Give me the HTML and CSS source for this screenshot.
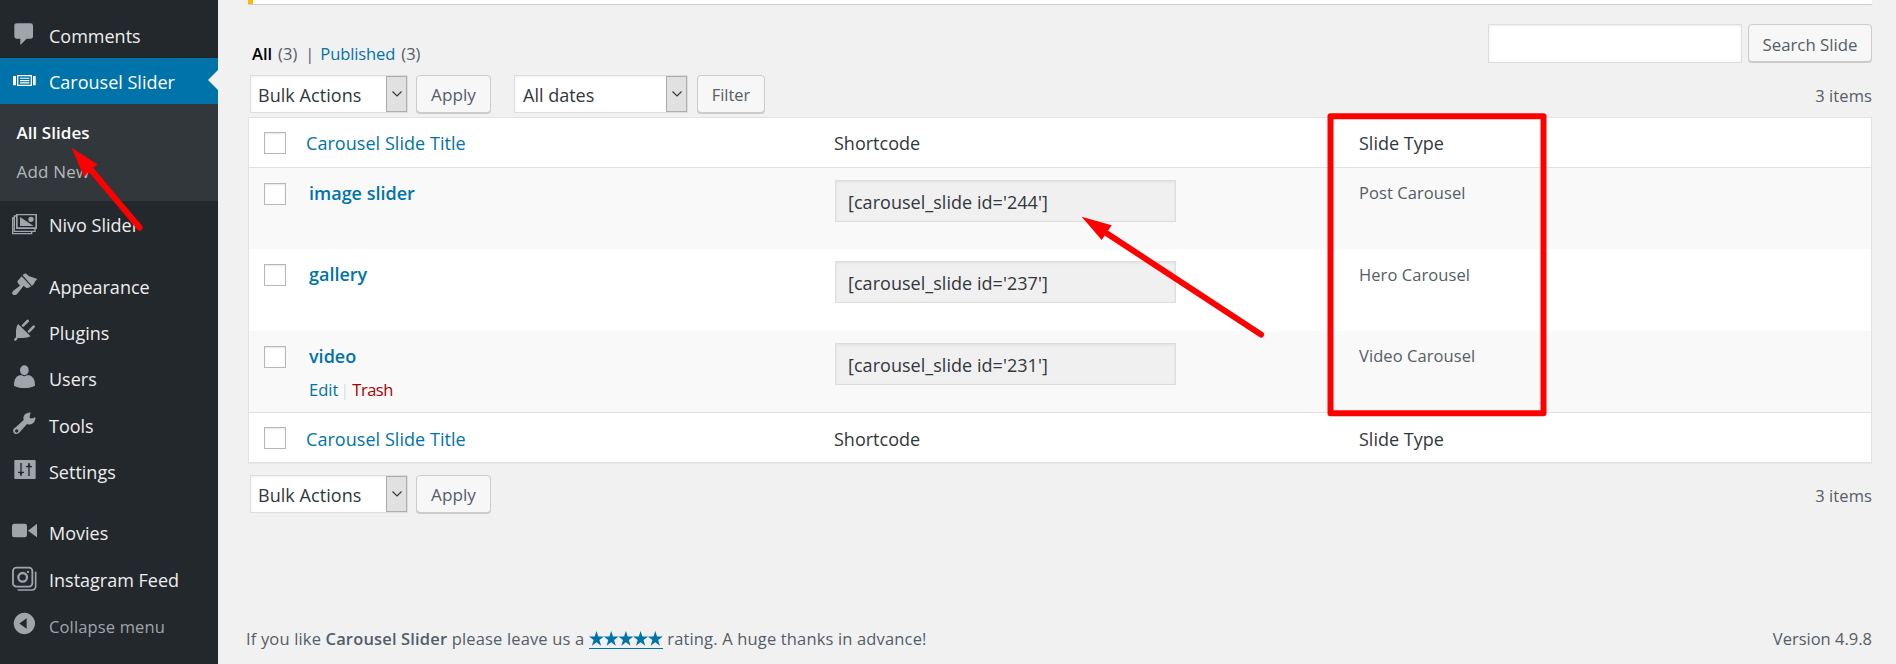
FILE: index.html
```html
<!DOCTYPE html>
<html lang="en">
<head>
<meta charset="utf-8">
<title>Slides</title>
<link rel="stylesheet" href="styles.css">
</head>
<body>
<div class="layout">
  <nav class="sidebar">
    <a class="item"><svg class="icon" viewBox="30 60 90 90"><path d="M51 70h41q7 0 7 7v31q0 8-7 8H80L61 135V116H51q-8 0-8-8V77q0-7 8-7z"/></svg>Comments</a>
    <a class="item current"><svg class="icon" viewBox="30 198 90 90"><path d="M39 228h9v28h-9zM99 228h8v28h-8zM51 225h45v33H51zM55 229v25h37v-25z" fill-rule="evenodd"/><path d="M60 233h28v3.500H60zM60 240h28v3.500H60zM60 247h28v3.500H60z"/></svg>Carousel Slider</a>
    <div class="submenu"><a class="sub active">All Slides</a><a class="sub">Add New</a></div>
    <a class="item"><svg class="icon" viewBox="30 27 90 90"><path d="M48 42h63v45H48zM53 46v36h53V46z" fill-rule="evenodd"/><path d="M60 51v27h41z"/><circle cx="93" cy="58" r="8"/><path d="M48 48h-5v46h62v-7M43 54h-5v47h57v-7" fill="none" stroke="#a0a5aa" stroke-width="4"/></svg>Nivo Slider</a>
    <div class="gap"></div>
    <a class="item"><svg class="icon" viewBox="30 213 90 90"><path d="M68 229q3-6 11-5l7 7q9 3 26 9-10 8-10 14l-6 7zM65 232l28 30q-8 8-15 4l-7-6-19 24q-5 6-12 3-6-3-3-8 3-5 9-8l14-11-7-9q-3-6 3-9z"/></svg>Appearance</a>
    <a class="item"><svg class="icon" viewBox="30 351 90 90"><path d="M54 375l38 37q-10 6-29 5l-9 0-6 8q-6 2-6-4l6-7V396q0-12 6-21z"/><path d="M69 380l14-14M87 397l14-14" fill="none" stroke="#a0a5aa" stroke-width="8" stroke-linecap="round"/></svg>Plugins</a>
    <a class="item tall"><svg class="icon" viewBox="30 489 90 90"><ellipse cx="73" cy="514" rx="13" ry="15"/><path d="M58 529l8 0q7 6 14 0l8 0q17 5 17 31-12 7-32 7t-31-7q0-26 16-31z"/></svg>Users</a>
    <a class="item"><svg class="icon" viewBox="30 30 90 90"><path d="M92 41q-4 8-3 16 9 4 17-3 1 12-7 19-9 6-18 2L59 100q-7 8-15 4-8-6-3-14 2-3 6-5L71 63q-3-11 5-18 8-6 16-4zM50 91a5 5 0 1 0 .1 0z" fill-rule="evenodd"/></svg>Tools</a>
    <a class="item"><svg class="icon" viewBox="30 168 90 90"><rect x="43" y="183" width="64" height="57" rx="3"/><path d="M63 192v39M87 192v39M54 220h18M78 203h18" fill="none" stroke="#23282d" stroke-width="4"/><path d="M57 220h12l-6 9zM81 203h12l-6-9z" fill="#23282d"/></svg>Settings</a>
    <div class="gap"></div>
    <a class="item tall"><svg class="icon" viewBox="30 351 90 90"><rect x="36" y="374" width="45" height="41" rx="7"/><path d="M84 395l27-21v41z"/></svg>Movies</a>
    <a class="item"><svg class="icon" viewBox="30 492 90 90"><g fill="none" stroke="#a0a5aa" stroke-width="5.500"><rect x="39" y="506" width="58" height="57" rx="10"/><circle cx="68" cy="535" r="13" stroke-width="7"/><path d="M107 518v43q0 12-12 12H53" stroke-width="5"/></g><circle cx="84" cy="519" r="3.500"/></svg>Instagram Feed</a>
    <a class="item collapse"><svg class="icon" viewBox="30 630 90 90"><path d="M73 641.500a32 32 0 1 0 .1 0zM80 658v31l-22-15.500z" fill-rule="evenodd"/></svg>Collapse menu</a>
  </nav>
  <main class="main">
    <div class="notice"></div>
    <header class="head">
      <div class="views"><b>All</b><span>(3)</span><span class="bar">|</span><a>Published</a><span>(3)</span></div>
      <div class="search"><div class="field"></div><div class="button">Search Slide</div></div>
    </header>
    <div class="tablenav">
      <div class="select bulk"><span>Bulk Actions</span><i><svg viewBox="0 0 10 6"><path d="M.5.5L5 5 9.500.5"/></svg></i></div>
      <div class="button apply">Apply</div>
      <div class="select dates"><span>All dates</span><i><svg viewBox="0 0 10 6"><path d="M.5.5L5 5 9.500.5"/></svg></i></div>
      <div class="button filter">Filter</div>
      <span class="count">3 items</span>
    </div>
    <section class="table">
      <div class="row thead"><i class="check"></i><a>Carousel Slide Title</a><span>Shortcode</span><span>Slide Type</span></div>
      <div class="row alt"><i class="check"></i><div class="title"><b>image slider</b></div><div class="code">[carousel_slide id='244']</div><span class="type">Post Carousel</span></div>
      <div class="row mid"><i class="check"></i><div class="title"><b>gallery</b></div><div class="code">[carousel_slide id='237']</div><span class="type">Hero Carousel</span></div>
      <div class="row alt"><i class="check"></i><div class="title"><b>video</b><div class="actions"><a>Edit</a><span class="sep">|</span><a class="trash">Trash</a></div></div><div class="code">[carousel_slide id='231']</div><span class="type">Video Carousel</span></div>
      <div class="row tfoot"><i class="check"></i><a>Carousel Slide Title</a><span>Shortcode</span><span>Slide Type</span></div>
    </section>
    <div class="tablenav bottom">
      <div class="select bulk"><span>Bulk Actions</span><i><svg viewBox="0 0 10 6"><path d="M.5.5L5 5 9.500.5"/></svg></i></div>
      <div class="button apply">Apply</div>
      <span class="count">3 items</span>
    </div>
    <footer class="footer"><p>If you like <b>Carousel Slider</b> please leave us a <a class="stars"><svg viewBox="0 0 74 15"><defs><path id="star" d="M7.500 0l1.800 5.600h5.700l-4.600 3.500 1.700 5.700-4.600-3.500-4.600 3.500 1.700-5.700L0 5.600h5.700z"/></defs><use href="#star"/><use href="#star" x="14.700"/><use href="#star" x="29.400"/><use href="#star" x="44.100"/><use href="#star" x="58.800"/></svg></a> rating. A huge thanks in advance!</p><span>Version 4.9.8</span></footer>
  </main>
</div>
<svg class="marks" viewBox="0 0 1896 664">
  <path class="line" d="M92 171L139.500 227.500M1107 233.500L1261 334.500"/>
  <path class="tip" d="M71.700 147.700L97.700 164.500 91 169 84 177zM1081.700 216.700L1111.700 225.300 1101.700 240z"/>
  <rect class="line" x="1330.500" y="116.300" width="213" height="297"/>
</svg>
</body>
</html>
```
FILE: styles.css
```css
* { box-sizing: border-box; }
body { margin: 0; background: #f1f1f1; color: #555d66; font-family: "Open Sans", "Noto Sans", sans-serif; font-size: 16.5px; overflow: hidden; }
.layout { display: flex; height: 664px; }

.sidebar { width: 218px; background: #23282d; padding-top: 12px; flex: none; }
.item { display: flex; height: 46px; padding-left: 10px; color: #eee; font-size: 18px; line-height: 48px; letter-spacing: 0; white-space: nowrap; }
.gap ~ .item { line-height: 50px; }
.item.tall { height: 47px; }
.item.current { background: #0073aa; color: #fff; position: relative; }
.item.current::after { content: ""; position: absolute; right: 0; top: 12px; border: 10px solid transparent; border-right-color: #f1f1f1; border-left: 0; }
.sidebar .item.collapse { color: #a0a5aa; font-size: 16.5px; letter-spacing: .15px; line-height: 51px; }
.icon { width: 30px; height: 30px; margin: 8px 9px 0 0; fill: #a0a5aa; flex: none; }
.current .icon { fill: #fff; }
.gap { height: 15px; }
.submenu { height: 97px; background: #32373c; padding: 9px 0 0 16.5px; }
.sub { display: block; height: 39px; line-height: 39px; font-size: 17px; letter-spacing: .2px; color: #b4b9be; }
.sub.active { color: #fff; font-weight: 600; letter-spacing: .05px; }

.main { width: 1624px; margin-left: 30px; }
.notice { height: 4px; background: #fff; border-left: 5px solid #ffb900; box-shadow: 0 1px 1px rgba(0,0,0,.14); }
.head { display: flex; justify-content: space-between; height: 71px; }
.views { display: flex; padding: 38px 0 0 4px; line-height: 24px; }
.views b { color: #000; font-weight: 600; margin-right: 6px; }
.views .bar { margin: 0 6px 0 8px; }
.views a { margin-right: 6px; letter-spacing: -.1px; }
a { color: #0073aa; }
.search { display: flex; gap: 6px; padding-top: 20px; }
.field { width: 254px; height: 39px; background: #fff; border: 1px solid #ddd; box-shadow: inset 0 1px 3px rgba(0,0,0,.07); }
.button { height: 38px; border: 1px solid #ccc; border-radius: 4px; background: #f7f7f7; box-shadow: 0 1px 0 #ccc; text-align: center; line-height: 38px; font-size: 16.8px; }
.search .button { width: 124px; line-height: 39px; }
.tablenav { display: flex; height: 42px; padding-left: 2px; }
.select { display: flex; justify-content: space-between; height: 38px; background: #fff; border: 1px solid #ddd; color: #32373c; font-size: 18px; line-height: 38px; padding-left: 7px; box-shadow: inset 0 1px 3px rgba(0,0,0,.07); }
.select i { width: 21px; height: 36px; background: #e1e1e1; border: 1px solid #adadad; display: flex; justify-content: center; padding-top: 14px; }
.select svg { width: 10px; height: 6px; fill: none; stroke: #333; stroke-width: 1.1; }
.bulk { width: 158px; }
.bulk span { letter-spacing: .05px; }
.apply { width: 75px; margin-left: 8px; font-size: 17.2px; }
.dates { width: 174px; margin-left: 23px; padding-left: 8px; }
.filter { width: 68px; margin-left: 9px; font-size: 16.4px; }
.count { margin-left: auto; line-height: 42px; letter-spacing: .1px; }

.table { background: #fff; border: 1px solid #e2e2e2; box-shadow: 0 1px 1px rgba(0,0,0,.04); }
.row { display: grid; grid-template-columns: 58px 527px 525px 1fr; height: 81px; align-items: start; }
.row.alt { background: #f9f9f9; }
.row.mid { height: 82px; }
.thead, .tfoot { height: 50px; font-size: 18px; line-height: 50px; color: #32373c; }
.thead { border-bottom: 1px solid #e1e1e1; }
.tfoot { border-top: 1px solid #e1e1e1; line-height: 52px; }
.thead a, .tfoot a { margin-left: -1px; letter-spacing: .05px; }
.check { width: 22px; height: 22px; margin: 15px 0 0 15px; border: 1px solid #b4b9be; background: #fff; box-shadow: inset 0 1px 2px rgba(0,0,0,.1); }
.thead .check, .tfoot .check { margin-top: 14px; }
.title { padding: 11px 0 0 2px; }
.title b { display: block; font-size: 18px; font-weight: 600; line-height: 28px; color: #0073aa; }
.actions { display: flex; padding-top: 9px; line-height: 21px; }
.sep { color: #ddd; margin: 0 3px 0 2px; width: 9px; text-align: center; }
.trash { color: #a00; letter-spacing: -.5px; }
.code { width: 341px; height: 42px; margin: 12px 0 0 1px; border: 1px solid #ddd; background: #f0f0f0; box-shadow: inset 0 1px 3px rgba(0,0,0,.07); padding-left: 12px; font-size: 18px; line-height: 42px; letter-spacing: .04px; color: #32373c; }
.type { padding-top: 10px; line-height: 29px; letter-spacing: .08px; }
.mid .type { padding-top: 11px; }

.tablenav.bottom { margin-top: 12px; }
.footer { display: flex; justify-content: space-between; margin: 111px 0 0 -2px; line-height: 22px; }
.footer p { margin: 0; letter-spacing: .16px; }
.footer b { font-weight: 600; }
.stars { display: inline-block; height: 21px; border-bottom: 1.500px solid #0073aa; vertical-align: top; }
.stars svg { display: block; width: 74px; height: 15px; margin-top: 3px; fill: #0073aa; }

.marks { position: absolute; left: 0; top: 0; width: 1896px; height: 664px; pointer-events: none; }
.line { fill: none; stroke: #f00; stroke-width: 6; stroke-linecap: round; stroke-linejoin: round; }
.tip { fill: #f00; }
```
